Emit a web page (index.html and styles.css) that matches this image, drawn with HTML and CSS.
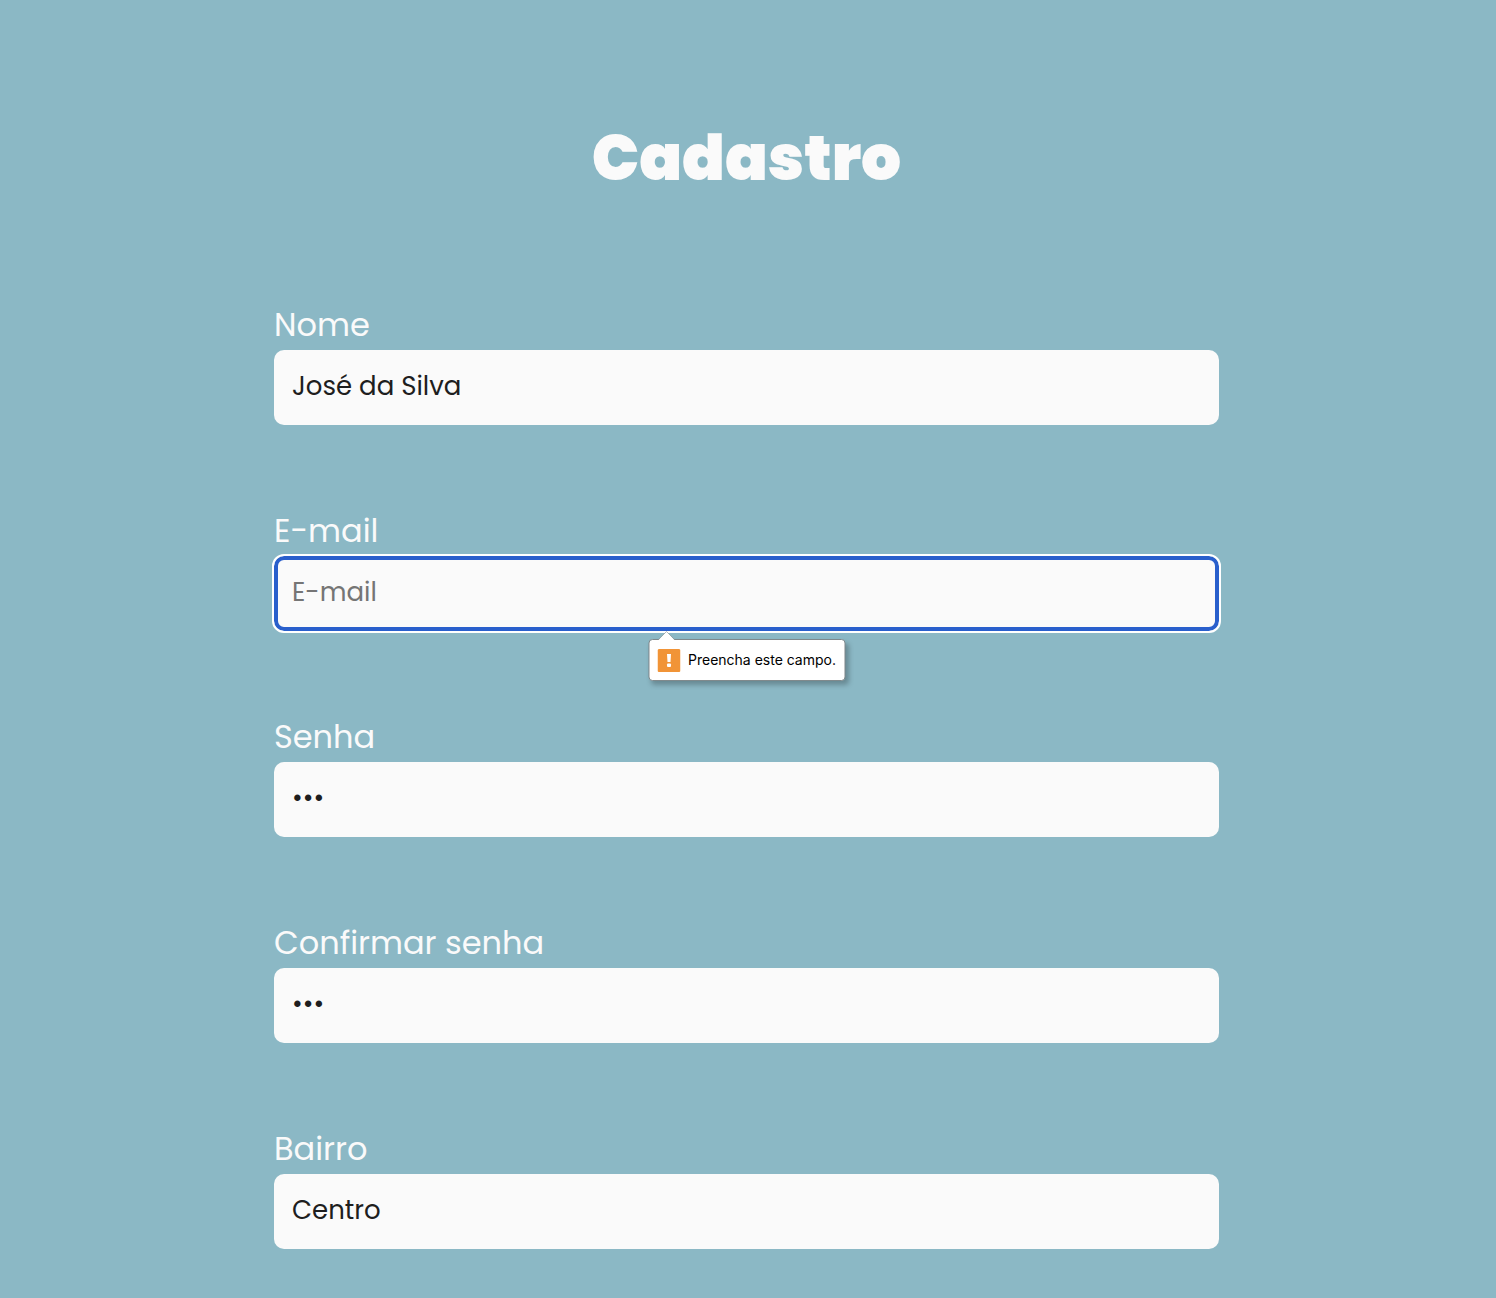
FILE: index.html
```html
<!DOCTYPE html>
<html lang="pt-BR">
<head>
  <meta charset="utf-8">
  <meta name="viewport" content="width=device-width, initial-scale=1">
  <title>Cadastro</title>
  <link rel="stylesheet" href="styles.css">
</head>
<body>
  <main class="page">
    <h1 class="title">Cadastro</h1>
    <form class="form" novalidate>
      <div class="field">
        <label class="label" for="nome">Nome</label>
        <input class="input" id="nome" type="text" placeholder="Nome" value="José da Silva" required>
      </div>
      <div class="field">
        <label class="label" for="email">E-mail</label>
        <input class="input input-focused" id="email" type="email" placeholder="E-mail" aria-describedby="email-aviso" required>
        <div class="tooltip" id="email-aviso" role="alert">
          <svg class="tooltip-arrow" width="18" height="10" viewBox="0 0 18 10" aria-hidden="true">
            <path d="M1 10 9 1.500 17 10z" fill="#fff"/>
            <path d="M0 9.500H1L9 1.500 17 9.500H18" fill="none" stroke="#8b8f91" stroke-opacity=".6"/>
          </svg>
          <svg class="tooltip-icon" width="23" height="23" viewBox="0 0 23 23" aria-hidden="true">
            <rect width="23" height="23" rx="1.500" fill="#f19437"/>
            <path d="M9.500 5h4l-.5 8h-3z" fill="#fff"/>
            <rect x="9.500" y="14.500" width="4" height="3.500" rx="1" fill="#fff"/>
          </svg>
          <span>Preencha este campo.</span>
        </div>
      </div>
      <div class="field">
        <label class="label" for="senha">Senha</label>
        <input class="input" id="senha" type="password" placeholder="Senha" value="123" required>
      </div>
      <div class="field">
        <label class="label" for="confirmar">Confirmar senha</label>
        <input class="input" id="confirmar" type="password" placeholder="Confirmar senha" value="123" required>
      </div>
      <div class="field">
        <label class="label" for="bairro">Bairro</label>
        <input class="input" id="bairro" type="text" placeholder="Bairro" value="Centro" required>
      </div>
    </form>
  </main>
</body>
</html>
```
FILE: styles.css
```css
* {
  box-sizing: border-box;
}

body {
  margin: 0;
  background: #8bb8c5;
  color: #fafafa;
  font-family: Poppins, Inter, "Liberation Sans", sans-serif;
}

.page {
  display: flex;
  flex-direction: column;
  align-items: center;
  gap: 94px;
  padding: 110px 3px 48px 0;
}

.title {
  margin: 0;
  font-size: 63px;
  font-weight: 900;
  line-height: 96px;
}

.form {
  display: flex;
  flex-direction: column;
  gap: 81px;
  width: 100%;
  max-width: 945px;
}

.field {
  position: relative;
  display: flex;
  flex-direction: column;
}

.label {
  font-size: 32px;
  line-height: 50px;
}

.input {
  width: 100%;
  height: 75px;
  padding: 0 18px 2px;
  border: 0;
  border-radius: 10px;
  background: #fafafa;
  color: #1e1e1e;
  font: inherit;
  font-size: 26px;
}

.input::placeholder {
  color: #757575;
}

.input-focused {
  outline: 2px solid #fff;
  box-shadow: inset 0 0 0 4px #295fcc;
}

.tooltip {
  position: absolute;
  top: calc(100% + 8px);
  left: 50%;
  display: flex;
  align-items: center;
  gap: 8px;
  height: 42px;
  padding: 0 8px;
  border: 1px solid #80898c;
  border-radius: 4px;
  background: #fff;
  box-shadow: 3px 4px 5px rgb(0 0 0 / 25%);
  color: #000;
  font-family: Inter, "Liberation Sans", sans-serif;
  font-size: 14px;
  line-height: 20px;
  white-space: nowrap;
  transform: translateX(-50%);
}

.tooltip-arrow {
  position: absolute;
  top: -10px;
  left: 8px;
}
```
